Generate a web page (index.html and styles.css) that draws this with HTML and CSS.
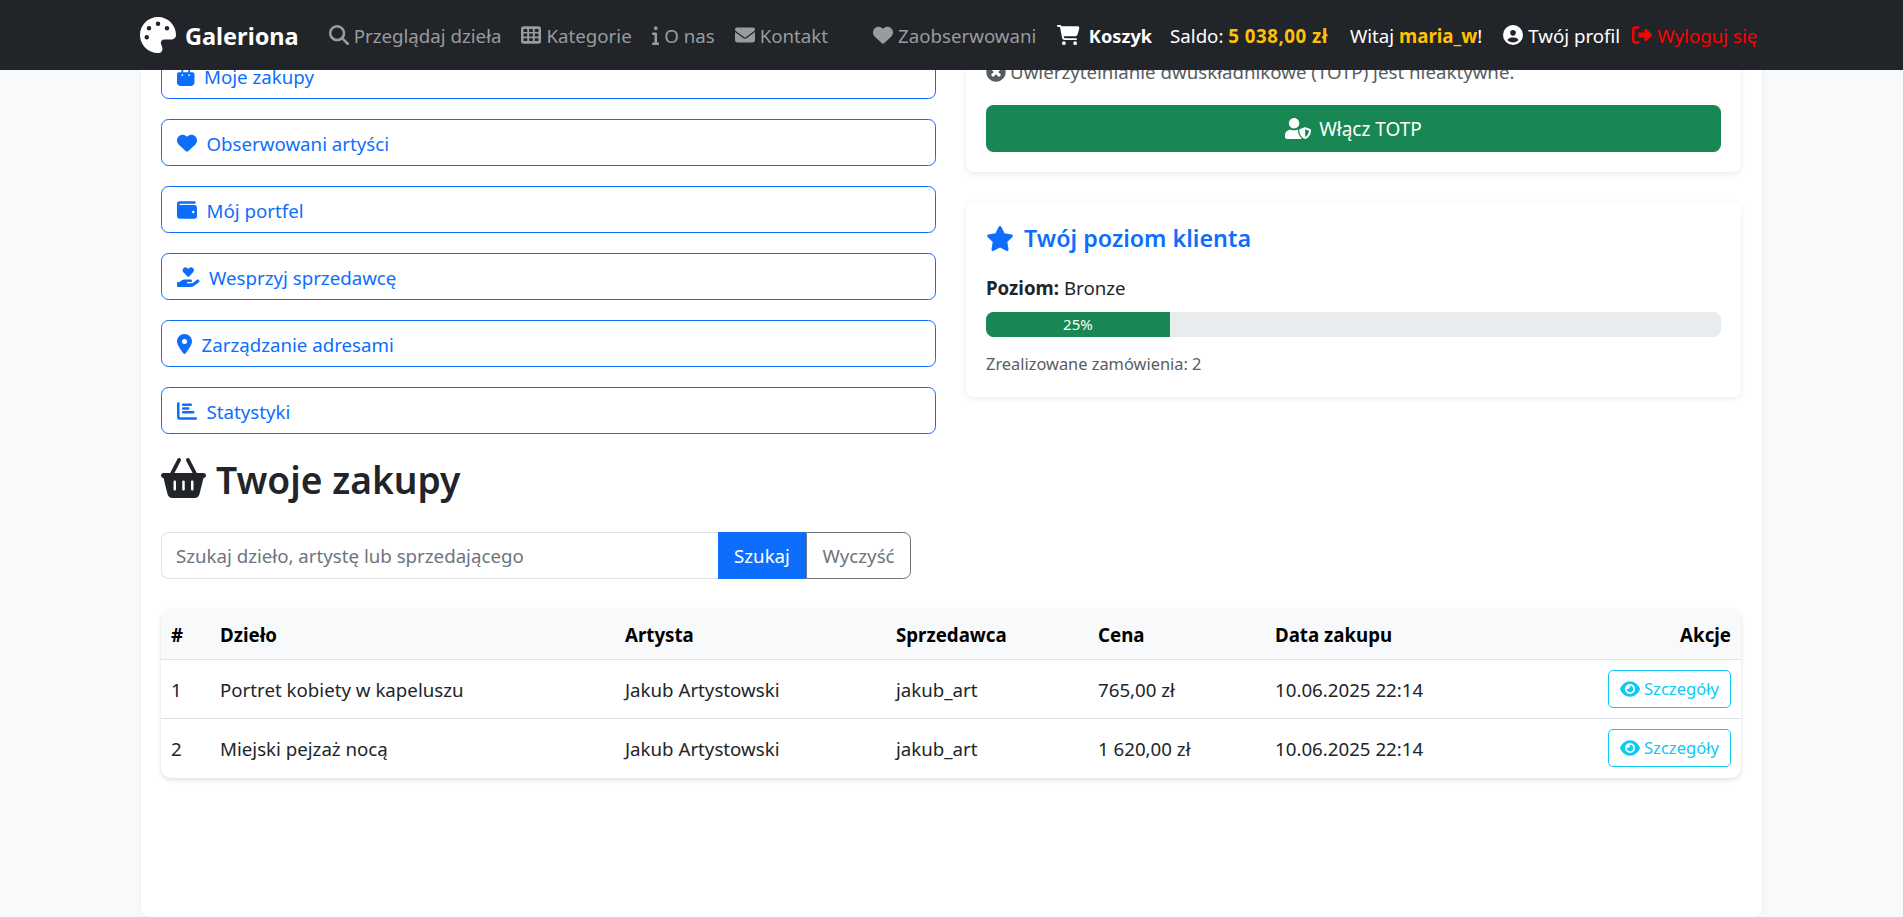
FILE: index.html
```html
<!DOCTYPE html>
<html lang="pl">
<head>
    <meta charset="UTF-8">
    <meta name="viewport" content="width=device-width, initial-scale=1.0">
    <title>Galeriona - Mój profil</title>
    <link rel="stylesheet" href="styles.css">
</head>
<body>
    <nav class="navbar">
        <a class="brand">
            <svg class="brand-icon" viewBox="0 0 512 512"><path d="M512 256c0 .9 0 1.800 0 2.700c-.4 36.500-33.600 61.300-70.100 61.300H344c-26.500 0-48 21.500-48 48c0 3.400 .4 6.700 1 9.900c2.100 10.200 6.500 20 10.800 29.900c6.100 13.800 12.100 27.500 12.100 42c0 31.800-21.600 60.700-53.400 62c-3.500 .1-7 .2-10.600 .2C114.600 512 0 397.400 0 256S114.600 0 256 0S512 114.600 512 256zM128 288a32 32 0 1 0 -64 0 32 32 0 1 0 64 0zm0-96a32 32 0 1 0 0-64 32 32 0 1 0 0 64zM288 96a32 32 0 1 0 -64 0 32 32 0 1 0 64 0zm96 96a32 32 0 1 0 0-64 32 32 0 1 0 0 64z"/></svg>
            Galeriona
        </a>
        <a class="nav-link link-browse">
            <svg class="icon" viewBox="0 0 512 512"><path d="M416 208c0 45.900-14.900 88.300-40 122.700L502.600 457.400c12.500 12.500 12.500 32.800 0 45.300s-32.800 12.500-45.300 0L330.700 376c-34.400 25.200-76.800 40-122.700 40C93.100 416 0 322.900 0 208S93.100 0 208 0S416 93.100 416 208zM208 352a144 144 0 1 0 0-288 144 144 0 1 0 0 288z"/></svg>
            Przeglądaj dzieła
        </a>
        <a class="nav-link">
            <svg class="icon" viewBox="0 0 512 512"><path fill-rule="evenodd" d="M64 32h384a64 64 0 0 1 64 64v320a64 64 0 0 1-64 64H64a64 64 0 0 1-64-64V96a64 64 0 0 1 64-64zM64 104v72h96v-72zM208 104v72h96v-72zM352 104v72h96v-72zM64 220v72h96v-72zM208 220v72h96v-72zM352 220v72h96v-72zM64 336v72h96v-72zM208 336v72h96v-72zM352 336v72h96v-72z"/></svg>
            Kategorie
        </a>
        <a class="nav-link">
            <svg class="icon icon-info" viewBox="0 0 192 512"><path d="M48 80a48 48 0 1 1 96 0A48 48 0 1 1 48 80zM0 224c0-17.700 14.300-32 32-32H96c17.700 0 32 14.300 32 32V448h32c17.700 0 32 14.300 32 32s-14.300 32-32 32H32c-17.700 0-32-14.300-32-32s14.300-32 32-32H64V256H32c-17.700 0-32-14.300-32-32z"/></svg>
            O nas
        </a>
        <a class="nav-link">
            <svg class="icon" viewBox="0 0 512 512"><path d="M48 64C21.500 64 0 85.500 0 112c0 15.100 7.100 29.300 19.200 38.400L236.800 313.600c11.400 8.500 27 8.500 38.400 0L492.800 150.400c12.100-9.100 19.200-23.300 19.200-38.400c0-26.500-21.500-48-48-48H48zM0 176V384c0 35.300 28.700 64 64 64H448c35.300 0 64-28.700 64-64V176L294.400 339.200c-22.800 17.100-54 17.100-76.800 0L0 176z"/></svg>
            Kontakt
        </a>
        <a class="nav-link link-watched">
            <svg class="icon" viewBox="0 0 512 512"><path d="M47.600 300.400L228.300 469.100c7.500 7 17.400 10.900 27.700 10.900s20.200-3.900 27.700-10.900L464.400 300.400c30.400-28.300 47.600-68 47.600-109.500v-5.800c0-69.900-50.500-129.500-119.400-141C347 36.500 300.600 51.400 268 84L256 96 244 84c-32.600-32.600-79-47.500-124.600-39.900C50.500 55.600 0 115.200 0 185.100v5.800c0 41.500 17.200 81.200 47.600 109.500z"/></svg>
            Zaobserwowani
        </a>
        <a class="nav-link nav-cart">
            <svg class="icon icon-cart" viewBox="0 0 576 512"><path d="M0 24C0 10.700 10.700 0 24 0H69.500c22 0 41.500 12.800 50.600 32h411c26.300 0 45.500 25 38.600 50.400l-41 152.300c-8.500 31.400-37 53.300-69.500 53.300H170.700l5.400 28.500c2.200 11.300 12.100 19.500 23.600 19.500H488c13.300 0 24 10.700 24 24s-10.700 24-24 24H199.700c-34.600 0-64.300-24.600-70.700-58.500L77.400 54.500c-.7-3.800-4-6.500-7.900-6.500H24C10.700 48 0 37.300 0 24zM128 464a48 48 0 1 1 96 0 48 48 0 1 1 -96 0zm336-48a48 48 0 1 1 0 96 48 48 0 1 1 0-96z"/></svg>
            <b class="cart-label">Koszyk</b>
        </a>
        <span class="nav-text nav-balance">Saldo:&nbsp;<b class="gold balance-value">5 038,00 zł</b></span>
        <span class="nav-text nav-hello">Witaj&nbsp;<b class="gold">maria_w</b>!</span>
        <a class="nav-link nav-light">
            <svg class="icon" viewBox="0 0 512 512"><path d="M399 384.200C376.900 345.800 335.400 320 288 320H224c-47.400 0-88.900 25.800-111 64.200c35.200 39.200 86.200 63.800 143 63.800s107.800-24.700 143-63.800zM0 256a256 256 0 1 1 512 0A256 256 0 1 1 0 256zm256 16a72 72 0 1 0 0-144 72 72 0 1 0 0 144z"/></svg>
            Twój profil
        </a>
        <a class="nav-link nav-logout">
            <svg class="icon" viewBox="0 0 512 512"><path d="M377.900 105.900L500.700 228.700c7.200 7.200 11.300 17.100 11.300 27.300s-4.100 20.100-11.300 27.300L377.900 406.100c-6.400 6.400-15 9.900-24 9.900c-18.700 0-33.900-15.200-33.900-33.900l0-62.100-128 0c-17.700 0-32-14.300-32-32l0-64c0-17.700 14.300-32 32-32l128 0 0-62.100c0-18.700 15.200-33.900 33.900-33.900c9 0 17.600 3.600 24 9.900zM160 96L96 96c-17.700 0-32 14.300-32 32l0 256c0 17.700 14.300 32 32 32l64 0c17.700 0 32 14.300 32 32s-14.300 32-32 32l-64 0c-53 0-96-43-96-96L0 128C0 75 43 32 96 32l64 0c17.700 0 32 14.300 32 32s-14.300 32-32 32z"/></svg>
            Wyloguj się
        </a>
    </nav>

    <main class="page">
        <div class="profile-row">
            <div class="menu-col">
                <a class="menu-btn">
                    <svg class="icon icon-bag" viewBox="0 0 448 512"><path d="M160 112c0-35.300 28.700-64 64-64s64 28.700 64 64v48H160V112zm-48 48H48c-26.500 0-48 21.500-48 48V416c0 53 43 96 96 96H352c53 0 96-43 96-96V208c0-26.500-21.500-48-48-48H336V112C336 50.100 285.900 0 224 0S112 50.100 112 112v48zm24 48a24 24 0 1 1 0 48 24 24 0 1 1 0-48zm152 24a24 24 0 1 1 48 0 24 24 0 1 1-48 0z"/></svg>
                    Moje zakupy
                </a>
                <a class="menu-btn">
                    <svg class="icon" viewBox="0 0 512 512"><path d="M47.600 300.400L228.300 469.100c7.500 7 17.400 10.900 27.700 10.900s20.200-3.900 27.700-10.900L464.400 300.400c30.400-28.300 47.600-68 47.600-109.500v-5.800c0-69.900-50.500-129.500-119.400-141C347 36.500 300.600 51.400 268 84L256 96 244 84c-32.600-32.600-79-47.500-124.600-39.900C50.500 55.600 0 115.200 0 185.100v5.800c0 41.500 17.200 81.200 47.600 109.500z"/></svg>
                    Obserwowani artyści
                </a>
                <a class="menu-btn">
                    <svg class="icon" viewBox="0 0 512 512"><path d="M64 32C28.700 32 0 60.700 0 96V416c0 35.300 28.700 64 64 64H448c35.300 0 64-28.700 64-64V192c0-35.300-28.700-64-64-64H80c-8.800 0-16-7.200-16-16s7.200-16 16-16H448c17.700 0 32-14.300 32-32s-14.300-32-32-32H64zM416 272a32 32 0 1 1 0 64 32 32 0 1 1 0-64z"/></svg>
                    Mój portfel
                </a>
                <a class="menu-btn">
                    <svg class="icon icon-hand" viewBox="0 0 576 512"><path d="M163.900 136.900c-29.400-29.800-29.400-78.200 0-108s77-29.800 106.400 0l17.700 18 17.700-18c29.400-29.800 77-29.800 106.400 0s29.400 78.200 0 108L310.500 240.100c-6.200 6.300-14.300 9.400-22.500 9.400s-16.300-3.100-22.500-9.400L163.900 136.900zM568.200 336.300c13.100 17.800 9.300 42.800-8.500 55.900L433.100 485.500c-23.400 17.200-51.600 26.500-80.700 26.500H192 32c-17.700 0-32-14.300-32-32V416c0-17.700 14.300-32 32-32H68.800l44.900-36c22.700-18.200 50.900-28 80-28H272h16 64c17.700 0 32 14.300 32 32s-14.300 32-32 32H288 272c-8.800 0-16 7.200-16 16s7.200 16 16 16H392.600l119.700-88.200c17.800-13.100 42.800-9.300 55.900 8.500z"/></svg>
                    Wesprzyj sprzedawcę
                </a>
                <a class="menu-btn">
                    <svg class="icon icon-pin" viewBox="0 0 384 512"><path d="M215.700 499.200C267 435 384 279.400 384 192C384 86 298 0 192 0S0 86 0 192c0 87.400 117 243 168.300 307.200c12.300 15.300 35.100 15.300 47.400 0zM192 128a64 64 0 1 1 0 128 64 64 0 1 1 0-128z"/></svg>
                    Zarządzanie adresami
                </a>
                <a class="menu-btn">
                    <svg class="icon" viewBox="0 0 512 512"><path d="M32 32c17.700 0 32 14.300 32 32V400c0 8.800 7.200 16 16 16H480c17.700 0 32 14.300 32 32s-14.300 32-32 32H80c-44.200 0-80-35.800-80-80V64C0 46.300 14.300 32 32 32zm96 64c0-17.700 14.300-32 32-32l192 0c17.700 0 32 14.300 32 32s-14.300 32-32 32l-192 0c-17.700 0-32-14.300-32-32zm32 64l128 0c17.700 0 32 14.300 32 32s-14.300 32-32 32l-128 0c-17.700 0-32-14.300-32-32s14.300-32 32-32zm0 96H416c17.700 0 32 14.300 32 32s-14.300 32-32 32H160c-17.700 0-32-14.300-32-32s14.300-32 32-32z"/></svg>
                    Statystyki
                </a>
            </div>
            <div class="side-col">
                <section class="card card-totp">
                    <p class="totp-state">
                        <svg class="icon" viewBox="0 0 512 512"><path d="M256 8C119 8 8 119 8 256s111 248 248 248 248-111 248-248S393 8 256 8zm121.600 313.100c4.700 4.700 4.700 12.300 0 17L338 377.600c-4.700 4.700-12.300 4.700-17 0L256 312l-65.100 65.600c-4.700 4.700-12.300 4.700-17 0L134.400 338c-4.700-4.700-4.700-12.300 0-17l65.600-65-65.600-65.100c-4.700-4.700-4.700-12.300 0-17l39.600-39.600c4.700-4.700 12.300-4.700 17 0l65 65.700 65.100-65.600c4.700-4.700 12.300-4.700 17 0l39.600 39.600c4.700 4.700 4.700 12.300 0 17L312 256l65.600 65.100z"/></svg>
                        Uwierzytelnianie dwuskładnikowe (TOTP) jest nieaktywne.
                    </p>
                    <a class="totp-btn">
                        <svg class="icon icon-shield" viewBox="0 0 640 512"><path d="M622.300 271.100l-115.200-45c-4.100-1.600-12.600-3.700-22.200 0l-115.200 45c-10.700 4.200-17.700 14-17.700 24.900 0 111.600 68.700 188.800 132.900 213.900 9.600 3.700 18 1.600 22.200 0C558.400 489.900 640 420.500 640 296c0-10.900-7-20.700-17.700-24.900zM496 462.400V273.300l95.500 37.300c-5.600 87.100-60.900 135.400-95.500 151.800zM224 256c70.700 0 128-57.300 128-128S294.700 0 224 0 96 57.300 96 128s57.300 128 128 128zm96 40c0-2.500.8-4.800 1.100-7.200-2.500-.1-4.900-.8-7.500-.8h-16.700c-22.200 10.200-46.900 16-72.900 16s-50.600-5.800-72.900-16h-16.700C60.200 288 0 348.200 0 422.400V464c0 26.500 21.500 48 48 48h352c6.800 0 13.300-1.500 19.200-4-54-42.900-99.200-116.700-99.200-212z"/></svg>
                        Włącz TOTP
                    </a>
                </section>
                <section class="card card-level">
                    <h4 class="level-title">
                        <svg class="icon icon-star" viewBox="0 0 576 512"><path d="M316.900 18C311.600 7 300.400 0 288.100 0s-23.400 7-28.800 18L195 150.300 51.400 171.500c-12 1.800-22 10.200-25.700 21.700s-.7 24.200 7.900 32.700L137.800 329 113.200 474.700c-2 12 3 24.200 12.900 31.300s23 8 33.800 2.300l128.300-68.500 128.300 68.500c10.800 5.700 23.900 4.900 33.800-2.300s14.900-19.300 12.900-31.300L438.500 329 542.700 225.900c8.600-8.500 11.700-21.200 7.900-32.700s-13.700-19.900-25.700-21.700L381.200 150.300 316.900 18z"/></svg>
                        Twój poziom klienta
                    </h4>
                    <p class="level-name"><b>Poziom:</b> Bronze</p>
                    <div class="progress">
                        <div class="progress-bar" style="width: 25%">25%</div>
                    </div>
                    <p class="level-orders">Zrealizowane zamówienia: 2</p>
                </section>
            </div>
        </div>

        <h1 class="section-title">
            <svg class="icon icon-basket" viewBox="0 0 576 512"><path d="M253.300 35.100c6.100-11.800 1.500-26.300-10.200-32.400s-26.300-1.500-32.400 10.200L117.600 192H32c-17.700 0-32 14.300-32 32s14.300 32 32 32L83.900 463.500C91 492 116.600 512 146 512H430c29.400 0 55-20 62.100-48.500L544 256c17.700 0 32-14.300 32-32s-14.300-32-32-32H458.400L365.300 12.900C359.200 1.200 344.700-3.400 332.900 2.700s-16.300 20.600-10.200 32.400L404.300 192H171.700L253.300 35.100zM192 304v96c0 8.800-7.200 16-16 16s-16-7.200-16-16V304c0-8.800 7.200-16 16-16s16 7.200 16 16zm96-16c8.800 0 16 7.200 16 16v96c0 8.800-7.200 16-16 16s-16-7.200-16-16V304c0-8.800 7.200-16 16-16zm128 16v96c0 8.800-7.200 16-16 16s-16-7.200-16-16V304c0-8.800 7.200-16 16-16s16 7.200 16 16z"/></svg>
            Twoje zakupy
        </h1>

        <form class="search-group">
            <input class="search-input" type="text" placeholder="Szukaj dzieło, artystę lub sprzedającego">
            <button class="btn-search" type="button">Szukaj</button>
            <button class="btn-clear" type="button">Wyczyść</button>
        </form>

        <div class="table-wrap">
            <table class="orders">
                <thead>
                    <tr>
                        <th class="col-no">#</th>
                        <th class="col-work">Dzieło</th>
                        <th class="col-artist">Artysta</th>
                        <th class="col-seller">Sprzedawca</th>
                        <th class="col-price">Cena</th>
                        <th class="col-date">Data zakupu</th>
                        <th class="col-action">Akcje</th>
                    </tr>
                </thead>
                <tbody>
                    <tr>
                        <td>1</td>
                        <td>Portret kobiety w kapeluszu</td>
                        <td>Jakub Artystowski</td>
                        <td>jakub_art</td>
                        <td>765,00 zł</td>
                        <td>10.06.2025 22:14</td>
                        <td class="col-action">
                            <a class="btn-details">
                                <svg class="icon icon-eye" viewBox="0 0 576 512"><path d="M288 32c-80.800 0-145.500 36.800-192.600 80.600C48.600 156 17.300 208 2.500 243.700c-3.300 7.900-3.300 16.700 0 24.600C17.300 304 48.600 356 95.400 399.400C142.500 443.200 207.200 480 288 480s145.500-36.800 192.600-80.600c46.800-43.500 78.100-95.400 93-131.100c3.300-7.900 3.300-16.700 0-24.600c-14.900-35.700-46.200-87.700-93-131.100C433.500 68.800 368.800 32 288 32zM144 256a144 144 0 1 1 288 0 144 144 0 1 1 -288 0zm144-64c0 35.300-28.700 64-64 64c-7.100 0-13.900-1.200-20.300-3.300c-5.500-1.800-11.900 1.600-11.700 7.400c.3 6.900 1.300 13.800 3.200 20.700c13.700 51.200 66.400 81.600 117.600 67.900s81.600-66.400 67.900-117.600c-11.100-41.500-47.800-69.400-88.600-71.100c-5.800-.2-9.200 6.100-7.400 11.700c2.100 6.400 3.300 13.200 3.300 20.300z"/></svg>
                                Szczegóły
                            </a>
                        </td>
                    </tr>
                    <tr>
                        <td>2</td>
                        <td>Miejski pejzaż nocą</td>
                        <td>Jakub Artystowski</td>
                        <td>jakub_art</td>
                        <td>1 620,00 zł</td>
                        <td>10.06.2025 22:14</td>
                        <td class="col-action">
                            <a class="btn-details">
                                <svg class="icon icon-eye" viewBox="0 0 576 512"><path d="M288 32c-80.800 0-145.500 36.800-192.600 80.600C48.600 156 17.300 208 2.500 243.700c-3.300 7.900-3.300 16.700 0 24.600C17.300 304 48.600 356 95.400 399.400C142.500 443.200 207.200 480 288 480s145.500-36.800 192.600-80.600c46.800-43.500 78.100-95.400 93-131.100c3.300-7.900 3.300-16.700 0-24.600c-14.900-35.700-46.200-87.700-93-131.100C433.500 68.800 368.800 32 288 32zM144 256a144 144 0 1 1 288 0 144 144 0 1 1 -288 0zm144-64c0 35.300-28.700 64-64 64c-7.100 0-13.900-1.200-20.300-3.300c-5.500-1.800-11.900 1.600-11.700 7.400c.3 6.900 1.300 13.800 3.200 20.700c13.700 51.200 66.400 81.600 117.600 67.900s81.600-66.400 67.900-117.600c-11.100-41.500-47.800-69.400-88.600-71.100c-5.800-.2-9.200 6.100-7.400 11.700c2.100 6.400 3.300 13.200 3.300 20.300z"/></svg>
                                Szczegóły
                            </a>
                        </td>
                    </tr>
                </tbody>
            </table>
        </div>
    </main>
</body>
</html>
```

FILE: styles.css
```css
* {
    box-sizing: border-box;
}

body {
    margin: 0;
    background-color: #f8f9fa;
    color: #212529;
    font-family: "Noto Sans", "Open Sans", sans-serif;
    font-size: 18.7px;
    line-height: 24px;
    height: 917px;
    overflow: hidden;
}

.icon {
    width: 20px;
    height: 20px;
    fill: currentColor;
    flex: none;
}

/* navbar */
.navbar {
    position: fixed;
    top: 0;
    left: 0;
    right: 0;
    z-index: 10;
    height: 70px;
    padding: 2px 0 0 140px;
    background-color: #212529;
    color: #fff;
    display: flex;
    align-items: center;
    white-space: nowrap;
}

.navbar .icon {
    margin-top: -2px;
}

.brand {
    display: flex;
    align-items: center;
    gap: 9px;
    font-size: 23.5px;
    font-weight: 700;
    color: #fff;
}

.brand-icon {
    width: 36px;
    height: 36px;
    margin-top: -2px;
    fill: #fff;
}

.nav-link {
    display: flex;
    align-items: center;
    gap: 5px;
    margin-left: 20px;
    color: #9a9b9d;
}

.link-browse {
    margin-left: 30px;
}

.link-watched {
    margin-left: 45px;
}

.icon-info {
    width: 7.500px;
}

.nav-cart {
    margin-left: 21px;
    color: #fff;
    gap: 9px;
}

.icon-cart {
    width: 22.500px;
}

.cart-label {
    font-size: 18.200px;
}

.nav-text {
    display: flex;
    margin-left: 18px;
}

.balance-value {
    letter-spacing: 0.5px;
}

.nav-hello {
    margin-left: 22px;
}

.gold {
    color: #ffc107;
}

.nav-light {
    margin-left: 21px;
    color: #fff;
}

.nav-logout {
    margin-left: 12px;
    color: #f00;
}

/* page */
.page {
    width: 1621px;
    min-height: 917px;
    margin: 0 auto;
    padding: 52px 21px 0 20px;
    background-color: #fff;
    border-radius: 10px;
    box-shadow: 0 0 6px rgba(0, 0, 0, 0.05);
}

.profile-row {
    display: flex;
    gap: 30px;
    align-items: flex-start;
}

.menu-col {
    width: 775px;
    display: flex;
    flex-direction: column;
    gap: 20px;
}

.menu-btn {
    display: flex;
    align-items: center;
    gap: 9.500px;
    height: 47px;
    padding: 2px 15px 0;
    border: 1px solid #0d6efd;
    border-radius: 7.500px;
    color: #0d6efd;
}

.menu-btn .icon {
    margin-top: -2px;
}

.icon-bag {
    width: 17.500px;
}

.icon-hand {
    width: 22.500px;
}

.icon-pin {
    width: 15px;
}

.side-col {
    width: 775px;
    display: flex;
    flex-direction: column;
    gap: 30px;
}

.card {
    background-color: #fff;
    border-radius: 8px;
    box-shadow: 0 2px 6px rgba(0, 0, 0, 0.08);
    padding: 20px;
}

.card-totp {
    margin-top: -19px;
    padding-top: 27px;
}

.totp-state {
    margin: 0;
    display: flex;
    align-items: center;
    gap: 4px;
    height: 24px;
    color: #595c5f;
}

.totp-btn {
    display: flex;
    align-items: center;
    justify-content: center;
    gap: 8px;
    height: 47px;
    margin-top: 21px;
    border-radius: 7.500px;
    background-color: #198754;
    color: #fff;
    font-size: 19px;
}

.icon-shield {
    width: 26px;
    height: 21px;
}

.level-title {
    display: flex;
    align-items: center;
    gap: 10px;
    margin: 0;
    padding-top: 2px;
    color: #0d6efd;
    font-size: 23.300px;
    font-weight: 600;
    line-height: 29px;
}

.icon-star {
    width: 28px;
    height: 25px;
}

.card-level {
    padding-bottom: 21px;
}

.level-name {
    margin: 23px 0 12px;
}

.progress {
    height: 25px;
    background-color: #e9ecef;
    border-radius: 7.500px;
    overflow: hidden;
}

.progress-bar {
    height: 100%;
    background-color: #198754;
    color: #fff;
    font-size: 15px;
    line-height: 25px;
    text-align: center;
}

.level-orders {
    margin: 15px 0 0;
    color: #595c5f;
    font-size: 16.400px;
}

.section-title {
    display: flex;
    align-items: center;
    gap: 10px;
    margin: 21px 0 0;
    padding-top: 2px;
    height: 48px;
    color: #212529;
    font-size: 37.200px;
    font-weight: 600;
    line-height: 46px;
}

.icon-basket {
    width: 45px;
    height: 40px;
    margin-top: -4px;
}

/* search */
.search-group {
    display: flex;
    width: 750px;
    height: 47px;
    margin-top: 29px;
}

.search-input {
    flex: 1;
    min-width: 0;
    padding: 0 14px;
    border: 1px solid #dee2e6;
    border-right: 0;
    border-radius: 7.500px 0 0 7.500px;
    outline: none;
    font: inherit;
    color: #212529;
}

.search-input::placeholder {
    color: #6c757d;
}

.btn-search {
    width: 88px;
    padding: 0;
    border: 1px solid #0d6efd;
    background-color: #0d6efd;
    color: #fff;
    font: inherit;
}

.btn-clear {
    width: 105px;
    padding: 0;
    border: 1px solid #6c757d;
    border-radius: 0 7.500px 7.500px 0;
    background-color: #fff;
    color: #6c757d;
    font: inherit;
}

/* table */
.table-wrap {
    margin-top: 30px;
    border-radius: 10px;
    overflow: hidden;
    box-shadow: 0 2px 5px rgba(0, 0, 0, 0.12);
}

.orders {
    width: 100%;
    border-collapse: collapse;
    table-layout: fixed;
}

.orders th {
    height: 50px;
    padding: 2px 10px 0;
    background-color: #f8f9fa;
    border-bottom: 1px solid #dee2e6;
    color: #000;
    font-weight: 700;
    text-align: left;
}

.orders td {
    height: 59px;
    padding: 2px 10px 0;
    border-bottom: 1px solid #dee2e6;
}

.orders tr:last-child td {
    height: 60px;
    border-bottom: 0;
}

.col-no { width: 49px; }
.col-work { width: 405px; }
.col-artist { width: 271px; }
.col-seller { width: 202px; }
.col-price { width: 177px; }
.col-date { width: 300px; }

.orders .col-action {
    text-align: right;
}

.orders td.col-action {
    padding-top: 0;
}

.btn-details {
    display: inline-flex;
    align-items: center;
    gap: 4px;
    height: 38px;
    padding: 0 11px;
    border: 1px solid #0dcaf0;
    border-radius: 5px;
    color: #0dcaf0;
    font-size: 16.600px;
    vertical-align: middle;
}

.icon-eye {
    width: 20px;
    height: 18px;
}
```
